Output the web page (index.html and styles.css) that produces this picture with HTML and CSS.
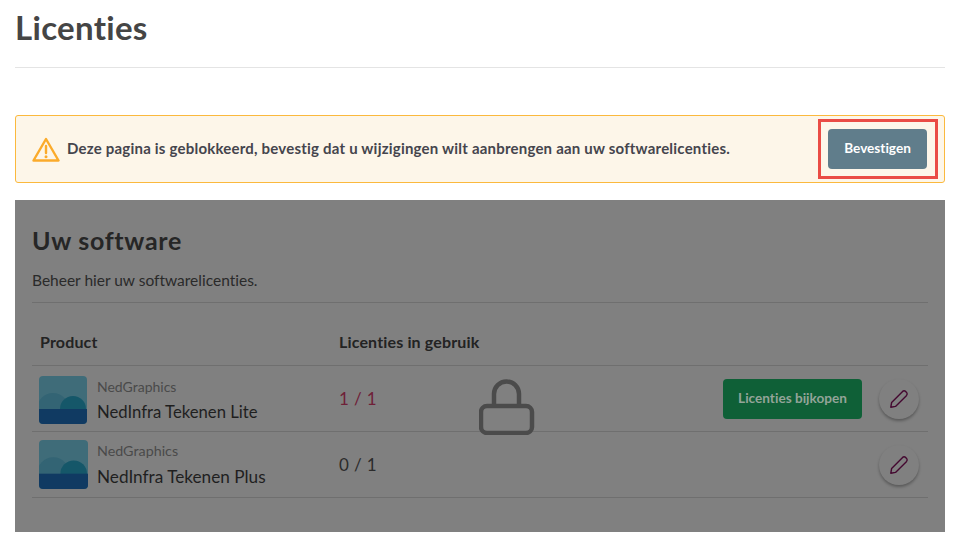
FILE: index.html
```html
<!DOCTYPE html>
<html lang="nl">
<head>
<meta charset="utf-8">
<title>Licenties</title>
<link rel="stylesheet" href="styles.css">
</head>
<body>
<header class="page-head">
  <h1 class="page-title">Licenties</h1>
</header>
<section class="alert">
  <svg class="alert-icon" viewBox="0 0 28 25" width="28" height="25" aria-hidden="true">
    <path d="M14 2 L26.5 23.5 H1.5 Z" fill="none" stroke="#fbab2b" stroke-width="2.4" stroke-linejoin="round"/>
    <path d="M14 9 V16" stroke="#fbab2b" stroke-width="2.4" stroke-linecap="round"/>
    <circle cx="14" cy="19.8" r="1.5" fill="#fbab2b"/>
  </svg>
  <p class="alert-text">Deze pagina is geblokkeerd, bevestig dat u wijzigingen wilt aanbrengen aan uw softwarelicenties.</p>
  <div class="confirm-frame"><button class="confirm-btn">Bevestigen</button></div>
</section>
<section class="panel">
  <h2 class="panel-title">Uw software</h2>
  <p class="panel-sub">Beheer hier uw softwarelicenties.</p>
  <div class="row head-row">
    <div class="col-product">Product</div>
    <div>Licenties in gebruik</div>
  </div>
  <div class="row item-row">
    <div class="col-product product product-lite">
      <svg class="logo" viewBox="0 0 48 48" aria-hidden="true">
        <defs><clipPath id="c1"><rect width="48" height="48" rx="4"/></clipPath></defs>
        <g clip-path="url(#c1)">
          <rect width="48" height="48" fill="#3f6c79"/>
          <circle cx="14" cy="33" r="16" fill="#336474"/>
          <circle cx="34" cy="33" r="13" fill="#155769"/>
          <rect y="33" width="48" height="15" fill="#103a62"/>
        </g>
      </svg>
      <div>
        <div class="vendor">NedGraphics</div>
        <div class="name">NedInfra Tekenen Lite</div>
      </div>
    </div>
    <div class="count count-full">1 / 1</div>
    <div class="actions">
      <button class="buy-btn">Licenties bijkopen</button>
      <button class="edit-btn" aria-label="Bewerken">
        <svg viewBox="0 0 20 20" width="20" height="20" aria-hidden="true"><path d="M1.8 18.2 L2.6 13.6 L13.6 2.4 Q15 1.2 16.6 2.4 L17.6 3.4 Q18.8 5 17.6 6.4 L6.5 17.4 Z" fill="none" stroke="#440830" stroke-width="1.4" stroke-linejoin="round"/></svg>
      </button>
    </div>
  </div>
  <div class="row item-row">
    <div class="col-product product product-plus">
      <svg class="logo" viewBox="0 0 48 48" aria-hidden="true">
        <defs><clipPath id="c2"><rect width="48" height="48" rx="4"/></clipPath></defs>
        <g clip-path="url(#c2)">
          <rect width="48" height="48" fill="#3f6c79"/>
          <circle cx="14" cy="33" r="16" fill="#336474"/>
          <circle cx="34" cy="33" r="13" fill="#155769"/>
          <rect y="33" width="48" height="15" fill="#103a62"/>
        </g>
      </svg>
      <div>
        <div class="vendor">NedGraphics</div>
        <div class="name">NedInfra Tekenen Plus</div>
      </div>
    </div>
    <div class="count">0 / 1</div>
    <div class="actions">
      <button class="edit-btn" aria-label="Bewerken">
        <svg viewBox="0 0 20 20" width="20" height="20" aria-hidden="true"><path d="M1.8 18.2 L2.6 13.6 L13.6 2.4 Q15 1.2 16.6 2.4 L17.6 3.4 Q18.8 5 17.6 6.4 L6.5 17.4 Z" fill="none" stroke="#440830" stroke-width="1.4" stroke-linejoin="round"/></svg>
      </button>
    </div>
  </div>
  <svg class="lock" viewBox="0 0 56 56" width="56" height="56" aria-hidden="true">
    <rect x="2" y="27" width="51" height="27" rx="6" fill="none" stroke="#4b4b4b" stroke-width="4.5"/>
    <path d="M15 27 V15 A12.5 12.5 0 0 1 40 15 V27" fill="none" stroke="#4b4b4b" stroke-width="4.5"/>
  </svg>
</section>
</body>
</html>
```
FILE: styles.css
```css
* { box-sizing: border-box; }
html, body { margin: 0; padding: 0; }
body {
  padding: 0 14px 0 15px;
  font-family: "Lato", "Liberation Sans", sans-serif;
  font-variant-ligatures: none;
  color: #444;
  background: #fff;
}
button { font-family: inherit; font-variant-ligatures: none; border: 0; cursor: pointer; }
.page-head {
  height: 68px;
  border-bottom: 1px solid #e4e4e4;
}
.page-title {
  margin: 0;
  padding-top: 8px;
  font-size: 33px;
  line-height: 39px;
  font-weight: 700;
  letter-spacing: .3px;
  color: #454545;
}
.alert {
  margin-top: 47px;
  height: 68px;
  display: flex;
  align-items: center;
  background: #fdf6e9;
  border: 1px solid #fbb93d;
  border-radius: 3px;
  padding: 0 6px 0 16px;
}
.alert-icon { flex: none; margin-right: 7px; }
.alert-text {
  margin: 0 0 3px;
  flex: 1;
  font-size: 15px;
  font-weight: 700;
  letter-spacing: .21px;
  color: #45454d;
}
.confirm-frame {
  width: 120px;
  height: 60px;
  border: 3px solid #ea4c45;
  display: flex;
  align-items: center;
  padding-left: 7px;
}
.confirm-btn {
  width: 99px;
  height: 40px;
  background: #607d8b;
  border-radius: 4px;
  color: #fff;
  font-size: 13.6px;
  font-weight: 700;
  padding: 0 0 3px;
}
.panel {
  position: relative;
  margin-top: 17px;
  height: 332px;
  background: #808080;
  padding: 25px 17px 0;
  color: #222;
}
.panel-title {
  margin: 0;
  font-size: 25px;
  line-height: 30px;
  font-weight: 700;
  letter-spacing: .7px;
  color: #262626;
}
.panel-sub {
  margin: 14px 0 0;
  font-size: 15.5px;
  line-height: 22px;
  height: 33px;
  color: #2a2a2a;
}
.row {
  display: grid;
  grid-template-columns: 299px 1fr auto;
  align-items: center;
  border-top: 1px solid #6f6f6f;
}
.head-row {
  height: 63px;
  padding: 14px 0 0 8px;
  font-size: 16px;
  letter-spacing: .15px;
  font-weight: 700;
  color: #232323;
}
.item-row {
  height: 66px;
  padding-left: 7px;
}
.item-row:last-of-type { border-bottom: 1px solid #6f6f6f; height: 67px; }
.product { display: flex; align-items: center; gap: 9px; }
.logo { width: 49px; height: 49px; flex: none; }
.vendor { font-size: 14px; line-height: 18px; color: #4a4a4a; }
.name { margin-top: 6px; font-size: 16.7px; line-height: 20px; color: #1f1f1f; }
.product-lite { padding-top: 2px; gap: 10px; }
.product-lite .logo { width: 48px; height: 48px; }
.product-plus .vendor { font-size: 14.3px; }
.product-plus .name { margin-top: 7px; font-size: 17.2px; }
.count { font-size: 17px; letter-spacing: .4px; color: #2b2b2b; padding-left: 1px; }
.count-full { color: #6f2038; }
.actions { display: flex; align-items: center; gap: 17px; padding-right: 9px; }
.buy-btn {
  width: 139px;
  height: 40px;
  border-radius: 4px;
  background: #0f6037;
  color: #93a499;
  font-size: 13.6px;
  font-weight: 700;
  padding: 0 0 2px;
}
.edit-btn {
  width: 40px;
  height: 40px;
  border-radius: 50%;
  background: #808080;
  box-shadow: 0 2px 3px rgba(0,0,0,.3);
  display: flex;
  align-items: center;
  justify-content: center;
  padding: 0;
}
.lock { position: absolute; left: 464px; top: 179px; }
```
